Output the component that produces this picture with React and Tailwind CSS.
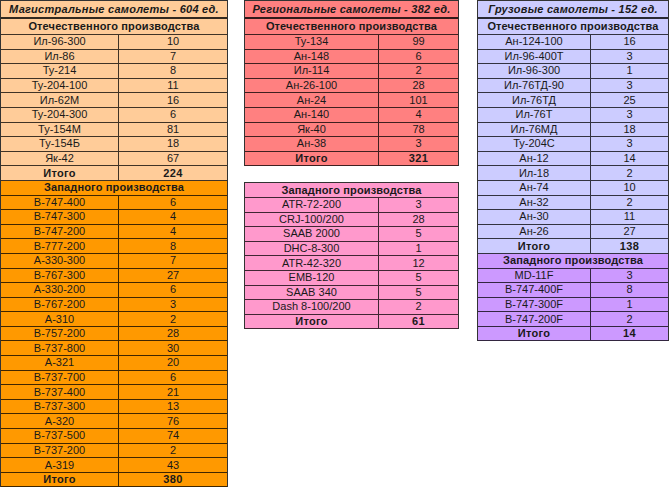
import React from "react";

const tables = [
  {
    title: "Магистральные самолеты - 604 ед.",
    titleBg: "bg-[#ffcc99]",
    width: "w-[228px]",
    split: "w-[118px]",
    sections: [
      {
        bg: "bg-[#ffcc99]",
        header: "Отечественного производства",
        rows: [
          ["Ил-96-300", 10], ["Ил-86", 7], ["Ту-214", 8], ["Ту-204-100", 11],
          ["Ил-62М", 16], ["Ту-204-300", 6], ["Ту-154М", 81], ["Ту-154Б", 18],
          ["Як-42", 67],
        ],
        total: 224,
      },
      {
        bg: "bg-[#ff9900]",
        header: "Западного производства",
        rows: [
          ["B-747-400", 6], ["B-747-300", 4], ["B-747-200", 4], ["B-777-200", 8],
          ["A-330-300", 7], ["B-767-300", 27], ["A-330-200", 6], ["B-767-200", 3],
          ["A-310", 2], ["B-757-200", 28], ["B-737-800", 30], ["A-321", 20],
          ["B-737-700", 6], ["B-737-400", 21], ["B-737-300", 13], ["A-320", 76],
          ["B-737-500", 74], ["B-737-200", 2], ["A-319", 43],
        ],
        total: 380,
      },
    ],
  },
  {
    title: "Региональные самолеты - 382 ед.",
    titleBg: "bg-[#ff8080]",
    width: "w-[215px]",
    split: "w-[134px]",
    sections: [
      {
        bg: "bg-[#ff8080]",
        header: "Отечественного производства",
        rows: [
          ["Ту-134", 99], ["Ан-148", 6], ["Ил-114", 2], ["Ан-26-100", 28],
          ["Ан-24", 101], ["Ан-140", 4], ["Як-40", 78], ["Ан-38", 3],
        ],
        total: 321,
      },
    ],
  },
  {
    width: "w-[215px]",
    split: "w-[134px]",
    sections: [
      {
        bg: "bg-[#ff99cc]",
        header: "Западного производства",
        rows: [
          ["ATR-72-200", 3], ["CRJ-100/200", 28], ["SAAB 2000", 5], ["DHC-8-300", 1],
          ["ATR-42-320", 12], ["EMB-120", 5], ["SAAB 340", 5], ["Dash 8-100/200", 2],
        ],
        total: 61,
      },
    ],
  },
  {
    title: "Грузовые самолеты - 152 ед.",
    titleBg: "bg-[#ccccff]",
    width: "w-[192px]",
    split: "w-[113px]",
    sections: [
      {
        bg: "bg-[#ccccff]",
        header: "Отечественного производства",
        rows: [
          ["Ан-124-100", 16], ["Ил-96-400Т", 3], ["Ил-96-300", 1], ["Ил-76ТД-90", 3],
          ["Ил-76ТД", 25], ["Ил-76Т", 3], ["Ил-76МД", 18], ["Ту-204С", 3],
          ["Ан-12", 14], ["Ил-18", 2], ["Ан-74", 10], ["Ан-32", 2],
          ["Ан-30", 11], ["Ан-26", 27],
        ],
        total: 138,
      },
      {
        bg: "bg-[#cc99ff]",
        header: "Западного производства",
        rows: [
          ["MD-11F", 3], ["B-747-400F", 8], ["B-747-300F", 1], ["B-747-200F", 2],
        ],
        total: 14,
      },
    ],
  },
];

const Row = ({ bg, split, left, right, bold }) => (
  <div className={`flex h-[14.6px] border-b border-black/75 ${bg} ${bold ? "font-bold tracking-[0.3px]" : ""}`}>
    <div className={`${split} shrink-0 border-r border-black/75 flex items-center justify-center`}>
      {left}
    </div>
    <div className="flex-1 flex items-center justify-center">{right}</div>
  </div>
);

const Table = ({ t }) => (
  <div className={`${t.width} border-x border-t border-black/80 shrink-0`}>
    {t.title && (
      <div
        className={`h-[18px] flex items-center justify-center border-b-2 border-black/80 font-bold italic tracking-[0.25px] ${t.titleBg}`}
      >
        {t.title}
      </div>
    )}
    {t.sections.map((s) => (
      <div key={s.header}>
        <div
          className={`${t.title && s === t.sections[0] ? "h-[16px]" : "h-[14.6px]"} flex items-center justify-center border-b border-black/75 font-bold tracking-[0.15px] ${s.bg}`}
        >
          {s.header}
        </div>
        {s.rows.map(([name, n], i) => (
          <Row key={i} bg={s.bg} split={t.split} left={name} right={n} />
        ))}
        <Row bg={s.bg} split={t.split} left="Итого" right={s.total} bold />
      </div>
    ))}
  </div>
);

export default function App() {
  return (
    <div className="w-[670px] h-[487px] bg-white overflow-hidden flex items-start whitespace-nowrap text-[11px] leading-none text-[#1a1a1a] font-['Liberation_Sans',Arial,sans-serif]">
      <Table t={tables[0]} />
      <div className="ml-[16px] flex flex-col gap-[16px]">
        <Table t={tables[1]} />
        <Table t={tables[2]} />
      </div>
      <div className="ml-[18px]">
        <Table t={tables[3]} />
      </div>
    </div>
  );
}
